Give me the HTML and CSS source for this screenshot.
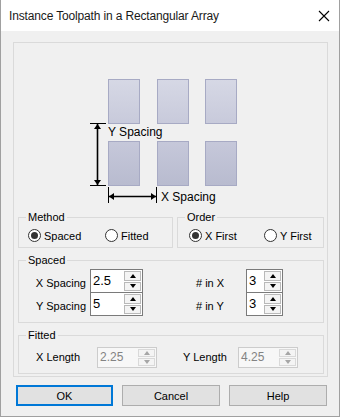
FILE: index.html
```html
<!DOCTYPE html>
<html lang="en">

<head>
    <meta charset="UTF-8">
    <title>Instance Toolpath in a Rectangular Array</title>
    <link rel="stylesheet" href="styles.css">
</head>

<body>
    <div class="window">
        <div class="titlebar">
            <span class="title">Instance Toolpath in a Rectangular Array</span>
            <svg class="close" width="12" height="12" viewBox="0 0 12 12">
                <path d="M1 1L11 11M11 1L1 11" stroke="#000" stroke-width="1.1" fill="none" />
            </svg>
        </div>
        <div class="client">
            <div class="panel">
                <!-- array preview -->
                <svg class="diagram" width="306" height="168" viewBox="0 0 306 168">
                    <defs>
                        <linearGradient id="cellTop" x1="0" y1="0" x2="0" y2="1">
                            <stop offset="0" stop-color="#d6d8e5" />
                            <stop offset="1" stop-color="#c8cadb" />
                        </linearGradient>
                        <linearGradient id="cellBottom" x1="0" y1="0" x2="0" y2="1">
                            <stop offset="0" stop-color="#c6c8da" />
                            <stop offset="1" stop-color="#b8bbcf" />
                        </linearGradient>
                    </defs>
                    <g stroke="#a7aac4" stroke-width="1" fill="url(#cellTop)">
                        <rect x="90.5" y="36.5" width="31" height="44" />
                        <rect x="139.5" y="36.5" width="31" height="44" />
                        <rect x="187.5" y="36.5" width="31" height="44" />
                    </g>
                    <g stroke="#a7aac4" stroke-width="1" fill="url(#cellBottom)">
                        <rect x="90.5" y="98.5" width="31" height="44" />
                        <rect x="139.5" y="98.5" width="31" height="44" />
                        <rect x="187.5" y="98.5" width="31" height="44" />
                    </g>
                    <g stroke="#000" fill="none">
                        <path d="M72 80.5H88M72 142.5H88" stroke-width="1" />
                        <path d="M79.5 81V142" stroke-width="1.6" />
                        <path d="M90.5 144V160M138.5 144V160" stroke-width="1" />
                        <path d="M91 153.5H138" stroke-width="1.6" />
                    </g>
                    <g fill="#000">
                        <path d="M79.5 81L76 86H83Z" />
                        <path d="M79.5 142L76 137H83Z" />
                        <path d="M91 153.5L96 150V157Z" />
                        <path d="M138 153.5L133 150V157Z" />
                    </g>
                    <text class="dim" x="90" y="93">Y Spacing</text>
                    <text class="dim" x="143" y="158">X Spacing</text>
                </svg>

                <div class="group-row">
                    <fieldset class="group method">
                        <legend>Method</legend>
                        <div class="options">
                            <label class="opt"><span class="radio on"></span>Spaced</label>
                            <label class="opt"><span class="radio"></span>Fitted</label>
                        </div>
                    </fieldset>
                    <fieldset class="group order">
                        <legend>Order</legend>
                        <div class="options">
                            <label class="opt"><span class="radio on"></span>X First</label>
                            <label class="opt"><span class="radio"></span>Y First</label>
                        </div>
                    </fieldset>
                </div>

                <fieldset class="group spaced">
                    <legend>Spaced</legend>
                    <div class="field-row">
                        <span class="lbl lbl-right">X Spacing</span>
                        <div class="spin wide">
                            <span class="val">2.5</span>
                            <span class="arrows"><span class="up"></span><span class="dn"></span></span>
                        </div>
                        <span class="lbl count-lbl"># in X</span>
                        <div class="spin narrow">
                            <span class="val">3</span>
                            <span class="arrows"><span class="up"></span><span class="dn"></span></span>
                        </div>
                    </div>
                    <div class="field-row second">
                        <span class="lbl lbl-right">Y Spacing</span>
                        <div class="spin wide">
                            <span class="val">5</span>
                            <span class="arrows"><span class="up"></span><span class="dn"></span></span>
                        </div>
                        <span class="lbl count-lbl"># in Y</span>
                        <div class="spin narrow">
                            <span class="val">3</span>
                            <span class="arrows"><span class="up"></span><span class="dn"></span></span>
                        </div>
                    </div>
                </fieldset>

                <fieldset class="group fitted">
                    <legend>Fitted</legend>
                    <div class="field-row">
                        <span class="lbl xlen-lbl">X Length</span>
                        <div class="spin off">
                            <span class="val">2.25</span>
                            <span class="arrows"><span class="up"></span><span class="dn"></span></span>
                        </div>
                        <span class="lbl ylen-lbl">Y Length</span>
                        <div class="spin off">
                            <span class="val">4.25</span>
                            <span class="arrows"><span class="up"></span><span class="dn"></span></span>
                        </div>
                    </div>
                </fieldset>
            </div>

            <div class="buttons">
                <button type="button" class="btn default">OK</button>
                <button type="button" class="btn">Cancel</button>
                <button type="button" class="btn">Help</button>
            </div>
        </div>
    </div>
</body>

</html>
```

FILE: styles.css
```css
body {
    margin: 0;
    font-family: "Liberation Sans", Arial, sans-serif;
    font-size: 11px;
    color: #000;
    background-color: #f0f0f0;
}

.window {
    width: 340px;
    height: 417px;
    box-sizing: border-box;
    border: 1px solid #a0a0a0;
    border-top: none;
    background-color: #f0f0f0;
}

.titlebar {
    height: 31px;
    background-color: #fff;
    display: flex;
    align-items: center;
    justify-content: space-between;
    padding: 0 8px 0 8px;
}

.title {
    font-size: 12px;
    letter-spacing: -0.15px;
    color: #1a1a1a;
}

.close {
    display: block;
    margin-right: 1px;
}

.client {
    padding: 11px 11px 0 12px;
}

.panel {
    border: 1px solid #dadada;
    padding: 0 3px 2px 4px;
}

.diagram {
    display: block;
}

.diagram .dim {
    font-family: "Liberation Sans", Arial, sans-serif;
    font-size: 12px;
    fill: #000;
}

/* group boxes */
.group {
    margin: 0;
    padding: 0;
    border: 1px solid #dadada;
    min-inline-size: 0;
    box-sizing: border-box;
}

.group legend {
    margin-left: 7px;
    padding: 0 2px;
    line-height: 13px;
    font-size: 11px;
}

.group-row {
    display: flex;
    gap: 4px;
}

.method {
    width: 155px;
    height: 37px;
}

.order {
    width: 147px;
    height: 37px;
}

.options {
    display: flex;
    align-items: center;
    height: 23px;
}

.method .options {
    padding-left: 9px;
}

.order .options {
    padding-left: 11px;
}

.opt {
    display: flex;
    align-items: center;
    font-size: 11px;
}

.method .opt:first-child {
    width: 77px;
}

.order .opt:first-child {
    width: 75px;
}

.radio {
    width: 13px;
    height: 13px;
    box-sizing: border-box;
    border: 1px solid #333;
    border-radius: 50%;
    background-color: #fff;
    margin-right: 3px;
    display: flex;
    align-items: center;
    justify-content: center;
}

.radio.on::after {
    content: "";
    width: 7px;
    height: 7px;
    border-radius: 50%;
    background-color: #333;
}

.spaced {
    margin-top: 6px;
    height: 69px;
}

.spaced .field-row:first-of-type {
    margin-top: 2px;
}

.fitted {
    margin-top: 6px;
    height: 45px;
}

.fitted .field-row {
    margin-top: 5px;
}

.field-row {
    display: flex;
}

.field-row.second {
    margin-top: -1px;
}

.lbl {
    font-size: 11px;
    line-height: 13px;
    padding-top: 8px;
}

.lbl-right {
    width: 67px;
    text-align: right;
    margin-right: 4px;
}

.count-lbl {
    margin-left: 53px;
    width: 50px;
}

.fitted .lbl {
    padding-top: 4px;
}

.xlen-lbl {
    margin-left: 17px;
    width: 61px;
}

.ylen-lbl {
    margin-left: 26px;
    width: 55px;
}

/* spin edits */
.spin {
    display: flex;
    height: 24px;
    box-sizing: border-box;
    border: 1px solid #7a7a7a;
    background-color: #fff;
}

.spin .val {
    flex: 1;
    font-size: 13px;
    line-height: 16px;
    padding: 3px 0 0 2px;
}

.spin.wide {
    width: 53px;
}

.spin.narrow {
    width: 37px;
}

.spin.off {
    width: 60px;
    height: 21px;
    border-color: #cccccc;
    background-color: #f7f7f7;
    color: #838383;
}

.spin.off .val {
    font-size: 12px;
    padding-top: 1px;
}

.arrows {
    width: 17px;
    display: flex;
    flex-direction: column;
    padding: 1px;
    gap: 1px;
}

.arrows span {
    flex: 1;
    border: 1px solid #b9b9b9;
    background-color: #f4f4f4;
    display: flex;
    align-items: center;
    justify-content: center;
}

.arrows .up::after,
.arrows .dn::after {
    content: "";
    border-left: 3.5px solid transparent;
    border-right: 3.5px solid transparent;
}

.arrows .up::after {
    border-bottom: 4px solid #000;
}

.arrows .dn::after {
    border-top: 4px solid #000;
}

.spin.off .arrows span {
    border-color: #d9d9d9;
}

.spin.off .arrows .up::after {
    border-bottom-color: #a6a6a6;
}

.spin.off .arrows .dn::after {
    border-top-color: #a6a6a6;
}

/* dialog buttons */
.buttons {
    display: flex;
    gap: 9px;
    margin: 8px 0 0 3px;
}

.btn {
    width: 98px;
    height: 21px;
    box-sizing: border-box;
    border: 1px solid #adadad;
    background-color: #e1e1e1;
    font-family: "Liberation Sans", Arial, sans-serif;
    font-size: 11px;
    padding: 0;
    color: #000;
}

.btn.default {
    width: 97px;
    border: 2px solid #0078d7;
}
```
